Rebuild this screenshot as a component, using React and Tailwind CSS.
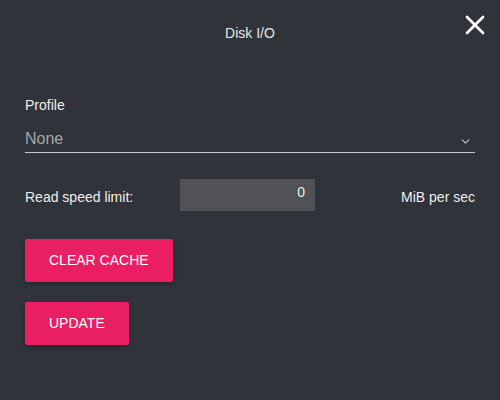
import { X, ChevronDown } from 'lucide-react';

const DiskIO = () => {
  return (
    <div className="w-[500px] h-[400px] bg-[#30333a] text-white font-['Liberation_Sans',Arial,sans-serif] px-[25px] flex flex-col">
      <div className="relative h-[66px] flex items-center justify-center">
        <h1 className="text-[14px] text-[#e6e6e6] mt-[1px]">Disk I/O</h1>
        <button className="absolute right-[-16px] top-[9px] text-white">
          <X size={32} strokeWidth={2} />
        </button>
      </div>

      <div className="mt-[31px]">
        <label className="block text-[14px] leading-[16px] text-[#eeeeee]">Profile</label>
        <div className="mt-[17px] flex items-center justify-between border-b border-[#c8c8c8] pb-[4px]">
          <span className="text-[16px] leading-[18px] text-[#a6a6a6]">None</span>
          <ChevronDown size={13} strokeWidth={2.2} className="text-[#c0c0c0] mr-[3px] mt-[4px]" />
        </div>
      </div>

      <div className="mt-[26px] flex items-center h-[32px]">
        <span className="w-[155px] text-[14px] text-[#eeeeee] mt-[4px]">Read speed limit:</span>
        <div className="w-[135px] h-[32px] bg-[#505255] flex items-start justify-end pr-[10px] pt-[3px] text-[14px] text-[#eeeeee]">
          0
        </div>
        <span className="ml-auto text-[14px] text-[#eeeeee] mt-[4px]">MiB per sec</span>
      </div>

      <div className="mt-[28px] flex flex-col items-start gap-[20px]">
        <button className="h-[43px] px-[24px] rounded-[2px] bg-[#e91e63] text-[14px] text-white shadow-[0_2px_4px_rgba(0,0,0,0.3)]">
          CLEAR CACHE
        </button>
        <button className="h-[43px] px-[24px] rounded-[2px] bg-[#e91e63] text-[14px] text-white shadow-[0_2px_4px_rgba(0,0,0,0.3)]">
          UPDATE
        </button>
      </div>
    </div>
  );
};

export default DiskIO;
